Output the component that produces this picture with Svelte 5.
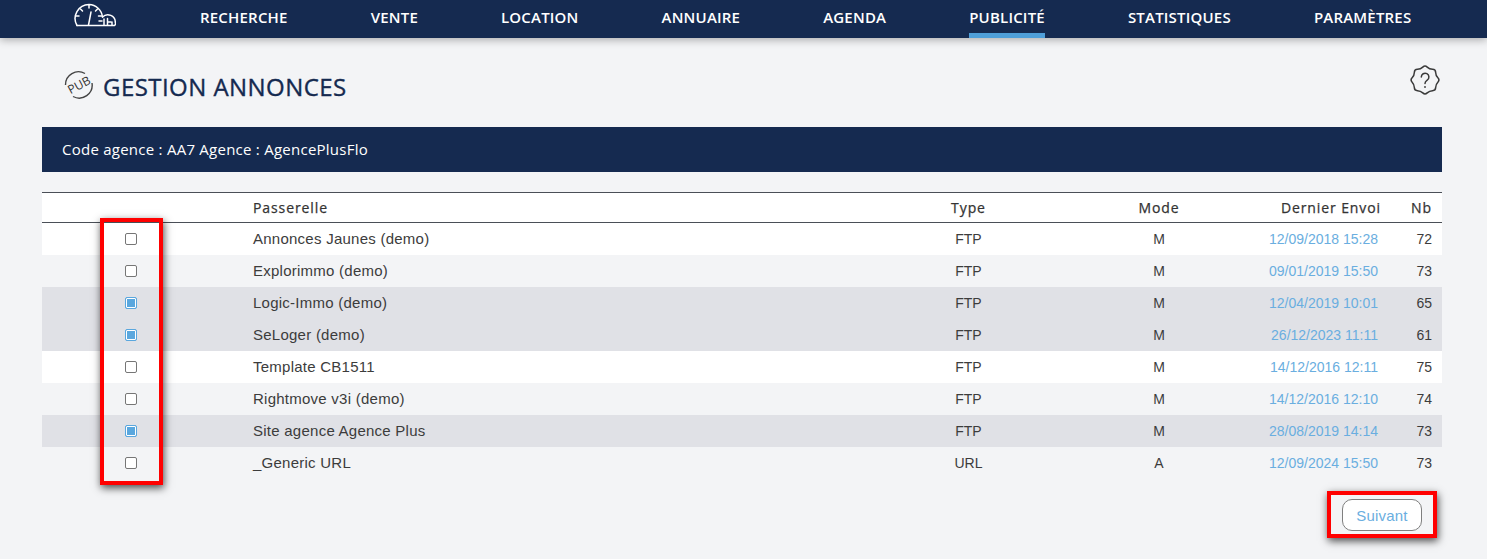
<script>
  const nav = ['RECHERCHE','VENTE','LOCATION','ANNUAIRE','AGENDA','PUBLICITÉ','STATISTIQUES','PARAMÈTRES'];
  const rows = [
    {n:'Annonces Jaunes (demo)',t:'FTP',m:'M',d:'12/09/2018 15:28',c:72,on:false,bg:'white'},
    {n:'Explorimmo (demo)',t:'FTP',m:'M',d:'09/01/2019 15:50',c:73,on:false,bg:'plain'},
    {n:'Logic-Immo (demo)',t:'FTP',m:'M',d:'12/04/2019 10:01',c:65,on:true,bg:'sel'},
    {n:'SeLoger (demo)',t:'FTP',m:'M',d:'26/12/2023 11:11',c:61,on:true,bg:'sel'},
    {n:'Template CB1511',t:'FTP',m:'M',d:'14/12/2016 12:11',c:75,on:false,bg:'white'},
    {n:'Rightmove v3i (demo)',t:'FTP',m:'M',d:'14/12/2016 12:10',c:74,on:false,bg:'plain'},
    {n:'Site agence Agence Plus',t:'FTP',m:'M',d:'28/08/2019 14:14',c:73,on:true,bg:'sel'},
    {n:'_Generic URL',t:'URL',m:'A',d:'12/09/2024 15:50',c:73,on:false,bg:'plain'}
  ];

  const pts = Array.from({ length: 16 }, (_, i) => {
    const a = (i * Math.PI) / 8 - Math.PI / 2;
    const r = i % 2 ? 11.6 : 15;
    return [15 + r * Math.cos(a), 15 + r * Math.sin(a)];
  });
  const mid = (p, q) => [(p[0] + q[0]) / 2, (p[1] + q[1]) / 2];
  const f = (p) => p[0].toFixed(2) + ' ' + p[1].toFixed(2);
  const wave =
    'M' + f(mid(pts[15], pts[0])) +
    pts.map((p, i) => 'Q' + f(p) + ' ' + f(mid(p, pts[(i + 1) % 16]))).join('') + 'z';
</script>

<div class="page">
  <header class="nav">
    <svg class="logo" viewBox="0 0 42 24" width="42" height="24" fill="none" stroke="#fff" stroke-width="1.500" stroke-linecap="round">
      <path d="M3 22.500H40.500a2.500 2.500 0 0 0 .8-3A7.500 7.500 0 0 0 28.500 14"/>
      <path d="M3 22.500A14 14 0 0 1 15 1.500a14 14 0 0 1 13.500 12.500"/>
      <path d="M15 2v3M6.500 6l2 2M2 13h3M23.500 6l-2 2M14.500 22l2.500-13"/>
      <path d="M24.500 13h3M25 18h3M30 22v-6M33.500 15.500v3M33.500 22v-3h3.500M38 19v3"/>
    </svg>
    <nav class="links">
      {#each nav as item}
        <span class="link" class:active={item === 'PUBLICITÉ'}>{item}</span>
      {/each}
    </nav>
  </header>

  <main class="content">
    <div class="titlebar">
      <div class="title">
        <svg class="pub" viewBox="0 0 30 30" width="30" height="30" fill="none">
          <path d="M1.500 15A13 13 0 0 1 21 3.500" stroke="#444" stroke-width="1.400"/>
          <path d="M28 13A13 13 0 0 1 9 26.500" stroke="#444" stroke-width="1.400"/>
          <text x="15" y="19.300" text-anchor="middle" transform="rotate(-28 15 15)">PUB</text>
        </svg>
        <h1>GESTION ANNONCES</h1>
      </div>
      <svg class="help" viewBox="0 0 30 30" width="30" height="30" fill="none" stroke="#3a3a3a" stroke-width="1.500" stroke-linejoin="round">
        <path d={wave}/>
        <path d="M11.300 12a3.800 3.800 0 1 1 5.900 3.200c-1.400 1-2.200 1.700-2.200 3.300" stroke-linecap="round"/>
        <circle cx="15" cy="22" r=".9" fill="#3a3a3a" stroke="none"/>
      </svg>
    </div>

    <div class="band">Code agence : AA7 Agence : AgencePlusFlo</div>

    <div class="grid head">
      <span></span>
      <span class="name">Passerelle</span>
      <span class="center">Type</span>
      <span class="center mode">Mode</span>
      <span class="date">Dernier Envoi</span>
      <span class="count">Nb</span>
    </div>
    {#each rows as r}
      <div class="grid row {r.bg}">
        <span class="check"><span class="box" class:on={r.on}></span></span>
        <span class="name">{r.n}</span>
        <span class="center">{r.t}</span>
        <span class="center mode">{r.m}</span>
        <span class="date link-date">{r.d}</span>
        <span class="count">{r.c}</span>
      </div>
    {/each}

    <div class="actions">
      <button class="next">Suivant</button>
    </div>
  </main>

  <div class="mark mark-col"></div>
  <div class="mark mark-btn"></div>
</div>

<style>
  :global(body) { margin: 0; background: #f3f4f6; }
  .page { position: relative; width: 1487px; height: 559px; overflow: hidden; background: #f3f4f6; font-family: "Liberation Sans", Arial, sans-serif; }

  .nav { display: flex; align-items: stretch; height: 38px; padding-left: 74px; background: #152a50; box-shadow: 0 2px 8px rgba(0,0,0,.3); box-sizing: border-box; }
  .logo { width: 42px; height: 24px; margin-top: 3px; margin-right: 84px; flex: none; }
  .links { display: flex; gap: 83px; }
  .link { display: block; height: 38px; box-sizing: border-box; padding-top: 7px; font: 600 15px/20px "Open Sans", sans-serif; letter-spacing: .2px; color: #fff; white-space: nowrap; }
  .link.active { border-bottom: 5px solid #4f9fd9; }

  .content { padding: 0 45px 0 42px; }
  .titlebar { display: flex; justify-content: space-between; height: 89px; box-sizing: border-box; padding: 26px 2px 0 22px; }
  .title { display: flex; align-items: flex-start; gap: 9px; }
  .pub { margin-top: 6px; flex: none; }
  .pub text { font: 400 12px "Open Sans", sans-serif; fill: #333; }
  h1 { margin: 0; padding-top: 7px; font: 400 24px/32px "Open Sans", sans-serif; color: #152a50; letter-spacing: .45px; -webkit-text-stroke: .35px #152a50; }
  .help { margin-top: 1px; flex: none; }

  .band { height: 45px; padding-left: 20px; background: #152a50; color: #fff; font: 500 15px/45px "Open Sans", sans-serif; letter-spacing: .25px; margin-bottom: 20px; }

  .grid { display: grid; grid-template-columns: 211px 643px 145px 196px 1fr 38px; align-items: center; font-size: 14px; color: #3c3c3c; }
  .head { height: 31px; box-sizing: border-box; background: #fff; border-top: 1px solid #4a4f57; border-bottom: 1px solid #4a4f57; font: 400 14px "Open Sans", sans-serif; letter-spacing: .9px; color: #333; -webkit-text-stroke: .25px #333; }
  .row { height: 32px; }
  .row .name { font-size: 15px; letter-spacing: .25px; padding-bottom: 2px; }
  .row.white { background: #fff; }
  .row.plain { background: #f3f4f6; }
  .row.sel { background: #e0e1e6; }

  .check { display: flex; padding-left: 83px; }
  .box { width: 12px; height: 12px; box-sizing: border-box; border: 1px solid #767676; border-radius: 2px; background: #fff; }
  .box.on { border-color: #5aa7de; background: #5aa7de; box-shadow: inset 0 0 0 1px #fff; }
  .center { text-align: center; }
  .mode { padding-left: 40px; }
  .date { text-align: right; padding-right: 23px; white-space: nowrap; }
  .link-date { color: #6aaee0; padding-right: 26px; }
  .count { text-align: right; padding-right: 10px; }

  .actions { display: flex; justify-content: flex-end; padding: 20px 20px 0 0; }
  .next { width: 80px; height: 32px; box-sizing: border-box; padding: 0; border: 1px solid #7f7f7f; border-radius: 10px; background: #fff; color: #6aaee0; font: 15px "Liberation Sans", Arial, sans-serif; letter-spacing: .2px; }

  .mark { position: absolute; box-sizing: border-box; border: 4px solid #f00; box-shadow: 1px 3px 8px rgba(0,0,0,.7); pointer-events: none; }
  .mark-col { left: 100px; top: 218px; width: 63px; height: 267px; }
  .mark-btn { left: 1327px; top: 491px; width: 110px; height: 47px; }
</style>
